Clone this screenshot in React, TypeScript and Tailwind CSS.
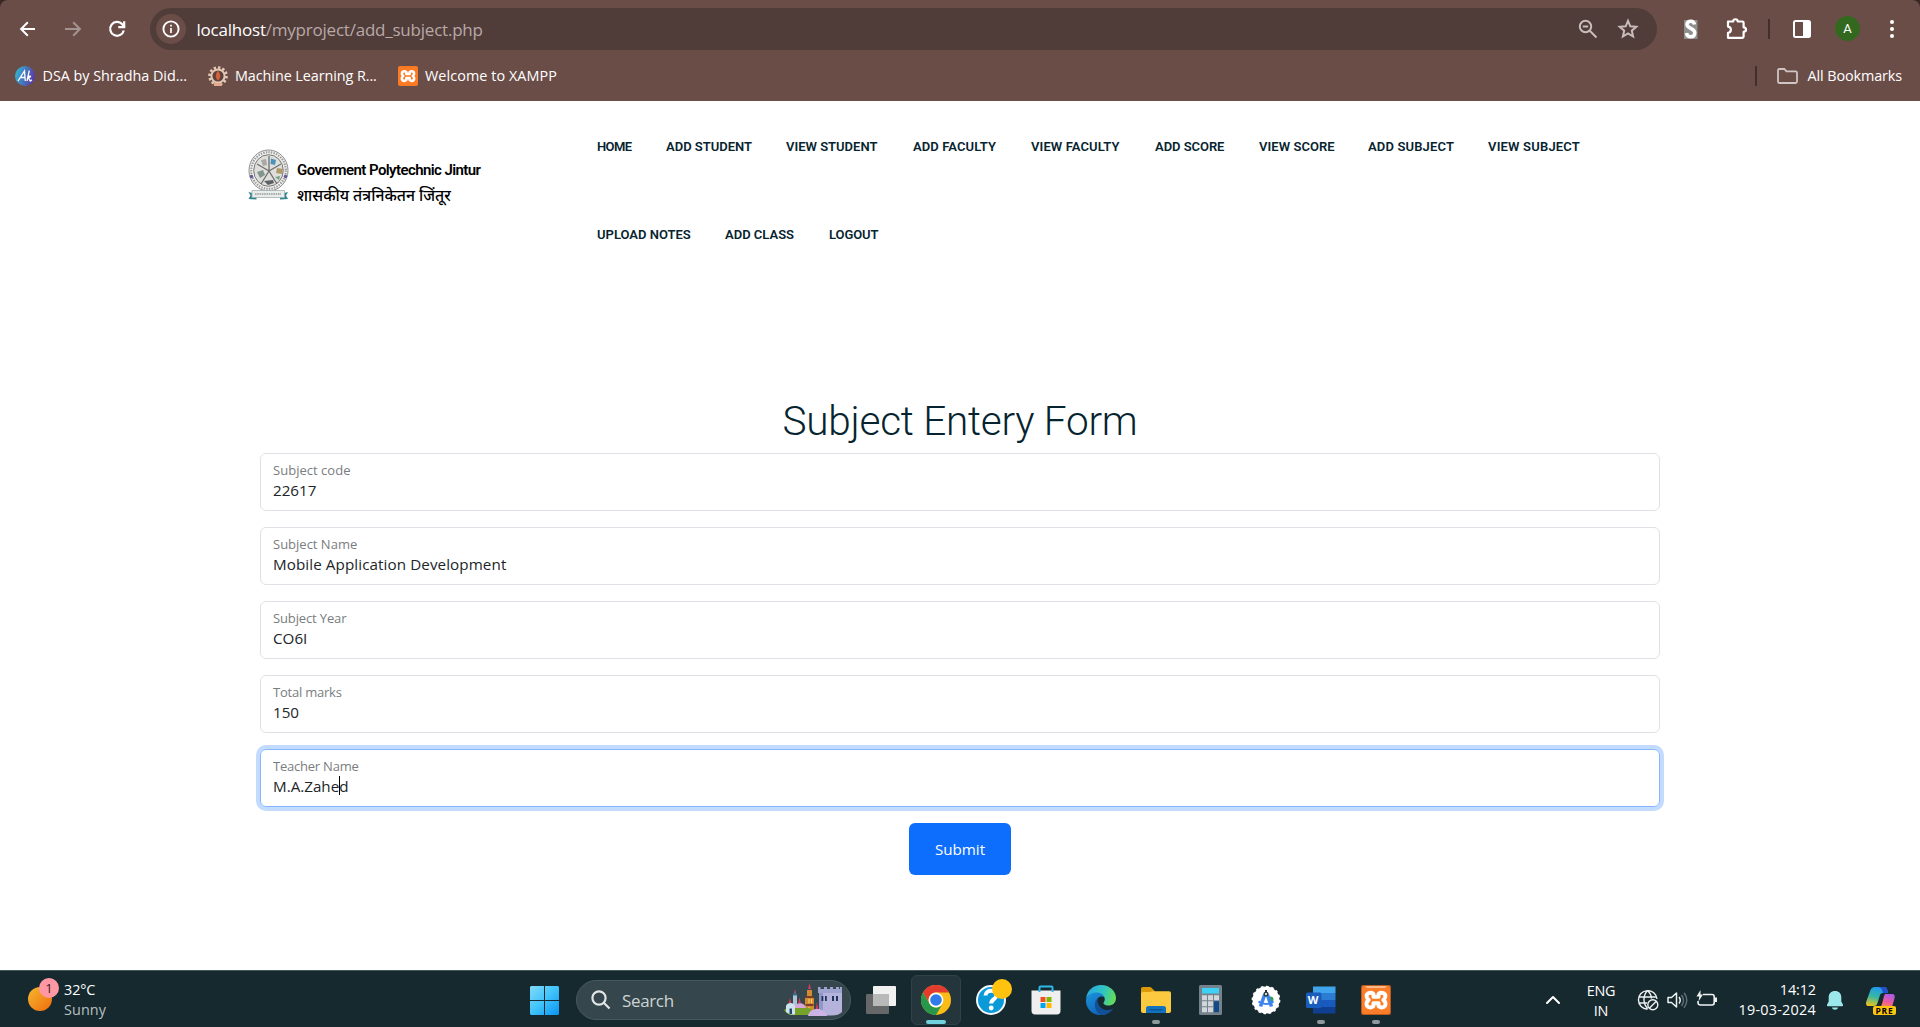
import type { ReactNode } from 'react';

const navRows = [
  [
    { label: 'HOME', cls: 'w-[69px] tracking-[-0.6px]' },
    { label: 'ADD STUDENT', cls: 'w-[120px]' },
    { label: 'VIEW STUDENT', cls: 'w-[127px]' },
    { label: 'ADD FACULTY', cls: 'w-[118px] tracking-[0.1px]' },
    { label: 'VIEW FACULTY', cls: 'w-[124px] tracking-[0.1px]' },
    { label: 'ADD SCORE', cls: 'w-[104px] tracking-[-0.05px]' },
    { label: 'VIEW SCORE', cls: 'w-[109px] tracking-[0.05px]' },
    { label: 'ADD SUBJECT', cls: 'w-[120px] tracking-[0.15px]' },
    { label: 'VIEW SUBJECT', cls: 'w-[110px] tracking-[0.19px]' },
  ],
  [
    { label: 'UPLOAD NOTES', cls: 'w-[128px]' },
    { label: 'ADD CLASS', cls: 'w-[104px]' },
    { label: 'LOGOUT', cls: 'w-[70px] tracking-[-0.1px]' },
  ],
];

const fields = [
  { label: 'Subject code', value: '22617', lt: 'tracking-[0.03px]', vt: 'tracking-normal' },
  { label: 'Subject Name', value: 'Mobile Application Development', lt: 'tracking-normal', vt: 'tracking-[0.09px]' },
  { label: 'Subject Year', value: 'CO6I', lt: 'tracking-[-0.14px]', vt: 'tracking-normal' },
  { label: 'Total marks', value: '150', lt: 'tracking-[-0.22px]', vt: 'tracking-normal' },
  { label: 'Teacher Name', value: 'M.A.Zahed', lt: 'tracking-[-0.22px]', vt: 'tracking-normal', focused: true },
];

function GearRing({ cx, cy, r, teeth, fill }: { cx: number; cy: number; r: number; teeth: number; fill: string }) {
  return (
    <circle cx={cx} cy={cy} r={r} fill="none" stroke={fill} strokeWidth="2.6" pathLength={teeth * 2} strokeDasharray="1.1 0.9" />
  );
}

function XamppMark() {
  return (
    <path
      d="M13 10.2c-2.4-1.8-5.4-.2-5.2 2 .1 1.4.7 2 1.6 2.8-1.300.8-1.800 1.600-1.700 3.100.1 2.500 3 3.500 5.300 1.700l0-2.300h4v2.300c2.300 1.800 5.200.8 5.300-1.700.1-1.500-.400-2.300-1.700-3.100.9-.8 1.500-1.400 1.600-2.800.2-2.200-2.800-3.800-5.200-2v2.300h-4z"
      fill="none"
      stroke="#fff"
      strokeWidth="3"
      strokeLinejoin="round"
    />
  );
}

function Toolbar() {
  return (
    <div className="flex h-[58px] items-start pl-[18px] pt-2">
      <svg className="mt-[11px]" width="20" height="20" viewBox="0 0 20 20" fill="none" stroke="#fff" strokeWidth="2">
        <path d="M17 10H3.500M9.800 3.300 3.100 10l6.700 6.700" />
      </svg>
      <svg className="ml-[25px] mt-[11px]" width="20" height="20" viewBox="0 0 20 20" fill="none" stroke="#a39391" strokeWidth="2">
        <path d="M2 10h14.500M10.200 3.300l6.700 6.700-6.700 6.700" />
      </svg>
      <svg className="ml-[24px] mt-[11px]" width="20" height="20" viewBox="0 0 20 20" fill="none" stroke="#fff" strokeWidth="2.200">
        <path d="M16.800 11.500A6.900 6.900 0 1 1 15.300 5.300l1.500 2" />
        <path d="M17.200 2.200v5.900h-5.900" />
      </svg>
      <div className="ml-[23px] flex h-[42px] w-[1507px] items-center rounded-full bg-[#503c39] pl-[6px]">
        <div className="flex size-[30px] items-center justify-center rounded-full bg-[#6b4d48]">
          <svg width="18" height="18" viewBox="0 0 18 18">
            <circle cx="9" cy="9" r="7.600" fill="none" stroke="#fff" strokeWidth="1.900" />
            <path d="M9 8v5M9 4.800v1.700" stroke="#fff" strokeWidth="1.700" />
          </svg>
        </div>
        <div className="ml-[10.500px] w-[1370px] pt-[1px] text-[17px] leading-6 tracking-[-0.22px] text-[#b8a9a7]">
          <span className="text-white">localhost</span>/myproject/add_subject.php
        </div>
        <svg className="ml-[10px]" width="22" height="22" viewBox="0 0 22 22" fill="none" stroke="#c8bdbb" strokeWidth="2">
          <circle cx="8.500" cy="8.500" r="5.700" />
          <path d="M12.800 12.800l6.700 6.700M5.800 8.500h5.400" />
        </svg>
        <svg className="ml-[17px]" width="24" height="24" viewBox="0 0 24 24" fill="none" stroke="#c8bdbb" strokeWidth="2">
          <path d="M12 3.800l2.300 5.500 6 .5-4.500 3.900 1.300 5.800L12 16.400l-5.100 3.100 1.300-5.800-4.500-3.900 6-.5z" />
        </svg>
      </div>
      <svg className="ml-[26px] mt-[11px]" width="16" height="20" viewBox="0 0 16 20">
        <path d="M1 1h13.500v19H1z" fill="#8e8e8e" />
        <path d="M11.500 5.500C11 2.800 9.900 2.200 7.900 2.200 5.300 2.200 3.900 3.600 4 5.600c.2 4.200 7.800 3.300 7.800 8.200 0 2.600-1.700 4-4 4-2.500 0-3.900-1.100-4.300-3.800" fill="none" stroke="#fff" strokeWidth="3.500" />
      </svg>
      <svg className="ml-[25px] mt-[8px]" width="26" height="26" viewBox="0 0 26 26">
        <path
          d="M4 5.500h5.200c.1-3 4.400-3 4.500 0h4.700c.8 0 1.200.5 1.200 1.200v4.600c3.200.2 3.200 4.400 0 4.600v4.700c0 .8-.5 1.200-1.200 1.200H4v-5c3.800-.4 3.800-5.800 0-6.200z"
          fill="none"
          stroke="#fff"
          strokeWidth="2.200"
          strokeLinejoin="round"
        />
      </svg>
      <div className="ml-[18px] mt-[11px] h-5 w-[2px] bg-[#422e2b]" />
      <svg className="ml-[22px] mt-[11px]" width="20" height="20" viewBox="0 0 20 20">
        <rect x="2" y="2" width="16" height="16" rx="1.500" fill="none" stroke="#fff" strokeWidth="2" />
        <path d="M11 2h7v16h-7z" fill="#fff" />
      </svg>
      <div className="ml-[23px] mt-[8px] flex size-[25px] items-center justify-center rounded-full bg-[#33691e] font-[Roboto] text-[13px] text-white">A</div>
      <div className="ml-[30px] mt-[12px] flex flex-col gap-[3px]">
        <i className="size-1 rounded-full bg-white" />
        <i className="size-1 rounded-full bg-white" />
        <i className="size-1 rounded-full bg-white" />
      </div>
    </div>
  );
}

function Bookmarks() {
  return (
    <div className="flex h-[43px] items-start pl-[15px] pt-2 text-[14.400px] leading-5 text-white">
      <svg width="20" height="20" viewBox="0 0 20 20">
        <defs>
          <linearGradient id="ak" x1="0" x2="1" y1="0.300" y2="0.600">
            <stop offset="0" stopColor="#33b5d0" />
            <stop offset="1" stopColor="#5a35a8" />
          </linearGradient>
        </defs>
        <circle cx="10" cy="10" r="10" fill="url(#ak)" />
        <path d="M3 15 9.500 5l.8 10M5 11.500h5M14.300 4.500 12 15m.800-3.500c3-3 4.200-.5.500 0l2 3.500 1.700-1.200" fill="none" stroke="#fff" strokeWidth="1.300" />
      </svg>
      <span className="ml-[7.500px] w-[165.500px] tracking-[-0.03px]">DSA by Shradha Did...</span>
      <svg width="20" height="20" viewBox="0 0 20 20">
        <GearRing cx={10} cy={10} r={8.500} teeth={12} fill="#e3c9b5" />
        <circle cx="10" cy="10" r="6.600" fill="#5d423c" stroke="#e3c9b5" strokeWidth="2" />
        <path d="M10 4.500c3 4.500 3 7 0 10-3-3-3-5.500 0-10z" fill="#d2603a" />
        <path d="M6 17h8v3H6z" fill="#e3a98d" />
      </svg>
      <span className="ml-[7px] w-[163px] tracking-[-0.08px]">Machine Learning R...</span>
      <svg width="20" height="20" viewBox="0 0 20 20">
        <rect width="20" height="20" rx="2" fill="#fb7a24" />
        <g transform="translate(-2.750 -2.750) scale(.85)">
          <XamppMark />
        </g>
      </svg>
      <span className="ml-[7px] w-[1330px] tracking-[0.070px]">Welcome to XAMPP</span>
      <div className="h-5 w-[2px] bg-[#422e2b]" />
      <svg className="ml-[20px]" width="21" height="20" viewBox="0 0 21 20" fill="none" stroke="#cfc5c3" strokeWidth="1.800">
        <path d="M1 4.500C1 3.500 1.500 3 2.300 3h5l2.200 2.300h9c.9 0 1.500.6 1.500 1.500v8.700c0 .9-.6 1.500-1.500 1.500H2.300C1.500 17 1 16.400 1 15.500z" />
      </svg>
      <span className="ml-[9.500px] tracking-[-0.1px]">All Bookmarks</span>
    </div>
  );
}

function Emblem() {
  return (
    <svg width="42" height="52" viewBox="0 0 42 52">
      <ellipse cx="20.500" cy="21.500" rx="19.500" ry="20.500" fill="#f1f1f0" stroke="#8d8d8d" strokeWidth="1" />
      <ellipse cx="20.500" cy="21.500" rx="17.300" ry="18.300" fill="none" stroke="#9a9a9a" strokeWidth="2.200" strokeDasharray="1.400 1.200" />
      <ellipse cx="20.500" cy="21.500" rx="14.800" ry="15.800" fill="#dededb" stroke="#777" strokeWidth="1" />
      <path d="M21 22 9 15M21 22l12-7M21 22 13 35M21 22l8 13M21 22V7" stroke="#6f6f6f" strokeWidth="1.300" />
      <path d="M23 9.500l5 1.500-1 5-4.500-1z" fill="#4b93b8" />
      <path d="M13 11l5-1 1 6-4 1z" fill="#aaa8a4" />
      <path d="M29 19l6 1-1 5-6-1z" fill="#b09a6a" />
      <path d="M9 23l6-2 2 5-5 3z" fill="#81978d" />
      <path d="M16 32l9-1 1 3-6 2z" fill="#5d5f62" />
      <path d="M27 28l5-1-1 4z" fill="#76a085" />
      <circle cx="3.500" cy="27.500" r="1.700" fill="#64569b" />
      <circle cx="37.500" cy="27.500" r="1.700" fill="#64569b" />
      <path d="M0.500 43l8 2v5.500l-8-.5 2-3.500zM40 43l-8 2v5.500l8-.5-2-3.500z" fill="#2f8590" />
      <path d="M4 41.500h32.500v7H4z" fill="#e9ecea" stroke="#9fb1ae" strokeWidth=".8" />
      <path d="M7 45h26" stroke="#8f9a98" strokeWidth="1.500" strokeDasharray="1.500 .8" />
    </svg>
  );
}

function SiteHeader() {
  return (
    <header className="flex h-[276px] pl-[248px]">
      <div className="flex w-[349px] items-start pt-[48px]">
        <Emblem />
        <div className="ml-[7px] mt-[7px] font-[Roboto] text-[15px] leading-6 font-semibold tracking-[-0.58px] whitespace-nowrap text-black">
          <div className="mt-[2px]">Goverment Polytechnic Jintur</div>
          <div className="mt-px font-['Noto_Sans'] text-[15.700px] font-medium tracking-normal">शासकीय तंत्रनिकेतन जिंतूर</div>
        </div>
      </div>
      <nav className="pt-[34px] font-[Roboto] text-[13px] leading-6 font-semibold whitespace-nowrap text-[#06242f]">
        {navRows.map((row, i) => (
          <div key={i} className="flex h-[88px]">
            {row.map((item) => (
              <a key={item.label} className={item.cls}>
                {item.label}
              </a>
            ))}
          </div>
        ))}
      </nav>
    </header>
  );
}

function SubjectForm() {
  return (
    <main className="flex flex-col items-center">
      <h1 className="mt-[19px] h-[57px] font-[Roboto] text-[40.500px] leading-[50px] font-light tracking-[-0.25px] text-[#06242f]">Subject Entery Form</h1>
      <form className="flex w-[1400px] flex-col items-center gap-4">
        {fields.map((f) => (
          <div
            key={f.label}
            className={
              f.focused
                ? 'h-[58px] w-full rounded-md border border-[#86b7fe] pl-3 pt-[7px] shadow-[0_0_0_4px_#c2dbfe]'
                : 'h-[58px] w-full rounded-md border border-[#dee2e6] pl-3 pt-[7px]'
            }
          >
            <div className={'text-[13px] leading-[18px] text-[#7a7d80] ' + f.lt}>{f.label}</div>
            <div className={'flex text-[15.200px] leading-[22px] text-[#212529] ' + f.vt}>
              {f.focused ? (
                <>
                  M.A.Zahe
                  <span className="relative">
                    <span className="absolute top-px left-0 h-[19px] w-px bg-black" />d
                  </span>
                </>
              ) : (
                f.value
              )}
            </div>
          </div>
        ))}
        <button type="button" className="h-[52px] w-[102px] rounded-md bg-[#0d6efd] text-[15.200px] text-white">
          Submit
        </button>
      </form>
    </main>
  );
}

function ChromeIcon() {
  return (
    <svg width="30" height="30" viewBox="0 0 30 30">
      <circle cx="15" cy="15" r="15" fill="#fbbc15" />
      <path d="M2 7.500A15 15 0 0 1 28 7.500H15a7.500 7.500 0 0 0-6.500 11.300z" fill="#e33b2e" />
      <path d="M2 7.500A15 15 0 0 0 15 30l6.500-11.200a7.500 7.500 0 0 1-13 0z" fill="#27984b" />
      <circle cx="15" cy="15" r="7.400" fill="#fff" />
      <circle cx="15" cy="15" r="5.800" fill="#2f7bea" />
    </svg>
  );
}

function HelpIcon() {
  return (
    <svg width="36" height="36" viewBox="0 0 36 36">
      <circle cx="15" cy="21" r="14" fill="#0a99d9" stroke="#f2f8fb" strokeWidth="2" />
      <path d="M9.500 16.500c.3-6.500 11.500-6 11 .2-.3 3.600-5.300 3.600-5.300 7.800" fill="none" stroke="#fff" strokeWidth="4" />
      <circle cx="15.200" cy="29" r="2.400" fill="#fff" />
      <circle cx="26" cy="10" r="10" fill="#ffc20e" />
    </svg>
  );
}

function StoreIcon() {
  return (
    <svg width="30" height="30" viewBox="0 0 30 30">
      <path d="M.5 5.500h29V26c0 2.200-1.300 3.500-3.500 3.500H4C1.800 29.500.5 28.200.5 26z" fill="#efefef" />
      <path d="M9.500 12h5v5h-5z" fill="#f25022" />
      <path d="M15.500 12h5v5h-5z" fill="#7fba00" />
      <path d="M9.500 18h5v5h-5z" fill="#00a4ef" />
      <path d="M15.500 18h5v5h-5z" fill="#ffb900" />
      <path d="M8.500 7V2.500c0-.6.300-1 1-1h11c.7 0 1 .4 1 1V7" fill="none" stroke="#2db9ea" strokeWidth="2" />
    </svg>
  );
}

function EdgeIcon() {
  return (
    <svg width="30" height="30" viewBox="0 0 30 30">
      <defs>
        <linearGradient id="eg1" x1="0" x2="1" y1="0.300" y2="0.500">
          <stop offset="0" stopColor="#2aa7e0" />
          <stop offset=".55" stopColor="#2fc4c4" />
          <stop offset="1" stopColor="#65dc55" />
        </linearGradient>
        <linearGradient id="eg2" x1="0" x2="0.600" y1="0" y2="1">
          <stop offset="0" stopColor="#1b95dc" />
          <stop offset="1" stopColor="#0f62b8" />
        </linearGradient>
      </defs>
      <path d="M0 14C1 5 7.500 0 15 0c9 0 15 6.500 15 13 0 5-3.500 7.500-7.500 7.500-4 0-5.500-1.700-5-2.700 2-2.500 1.500-5.300-.3-7C12.500 6.500 3 8 0 14z" fill="url(#eg1)" />
      <path d="M0 14.500C1.500 9.500 6 7.500 10.500 7.500c3.500 0 6.500 1.700 7.500 4.500-5-2-8 2-7 7 1 5.500 6 9.500 10.500 9.500C19.500 29.500 17.500 30 15 30 7 30-.8 24 0 14.500z" fill="url(#eg2)" />
      <path d="M12 12.800c-2 6.200 3 12.200 9.500 12.200 2.500 0 4.500-.8 6-1.700C25.500 27 21 30 16 30 9 29 6.500 17 12 12.800z" fill="#124f96" />
    </svg>
  );
}

function FolderIcon() {
  return (
    <svg width="30" height="26" viewBox="0 0 30 26">
      <path d="M0 2C0 .7.700 0 2 0h6.500c1 0 1.500.3 2.200 1l3 3v5H0z" fill="#dc9a08" />
      <path d="M0 7c0-1.300.7-2 2-2h7c1 0 1.600-.3 2.300-.8h16.700c1.300 0 2 .7 2 2V24c0 1.300-.7 2-2 2H2c-1.300 0-2-.7-2-2z" fill="#fdca3f" />
      <path d="M5 26v-4.500c0-1.700 1-2.500 2.500-2.500h15c1.500 0 2.500.8 2.500 2.500V26z" fill="#1272bd" />
      <path d="M8.500 22.800h13" stroke="#0b4f8d" strokeWidth="1.200" />
    </svg>
  );
}

function CalculatorIcon() {
  return (
    <svg width="23" height="30" viewBox="0 0 23 30">
      <rect width="23" height="30" rx="1.500" fill="#75818b" />
      <path d="M3 3h17v5.500H3z" fill="#3fd0f5" />
      <path d="M3 10.200h5v5H3zM9 10.200h5v5H9zM15 10.200h5v5h-5zM3 16.200h5v5H3zM9 16.200h5v5H9zM3 22.200h5v5H3zM9 22.200h5v5H9z" fill="#d0d6db" />
      <path d="M15 16.200h5v11h-5z" fill="#124a89" />
    </svg>
  );
}

function AndroidStudioIcon() {
  return (
    <svg width="30" height="30" viewBox="0 0 30 30">
      <circle cx="15" cy="15" r="13.500" fill="#fff" />
      <circle cx="15" cy="15" r="13.600" fill="none" stroke="#fff" strokeWidth="1.500" pathLength="32" strokeDasharray="1 1" />
      <circle cx="19.500" cy="14.500" r="3" fill="#34a34f" />
      <path d="M13.700 9.500 9.500 21.500M16.300 9.500l4.200 12" stroke="#3f83ee" strokeWidth="3.600" />
      <path d="M7.500 16.500c4 3.300 11 3.300 15 0" fill="none" stroke="#3f83ee" strokeWidth="2.200" />
      <path d="M15 5v2" stroke="#333" strokeWidth="2" />
      <circle cx="15" cy="9" r="1.800" fill="#fff" stroke="#333f48" strokeWidth="1.500" />
    </svg>
  );
}

function WordIcon() {
  return (
    <div className="relative">
      <svg width="30" height="30" viewBox="0 0 30 30">
        <path d="M7 1.500h22.500V8H7z" fill="#41a5ee" />
        <path d="M7 8h22.500v7H7z" fill="#2b7cd3" />
        <path d="M7 15h22.500v7H7z" fill="#185abd" />
        <path d="M7 22h22.500v6.500H7z" fill="#103f91" />
        <rect x="0" y="7.500" width="15.500" height="15.500" rx="1.500" fill="#1a5cbe" />
      </svg>
      <span className="absolute top-[7px] left-0 w-[15px] text-center text-[11px] leading-4 font-bold text-white">W</span>
    </div>
  );
}

function XamppIcon() {
  return (
    <svg width="30" height="30" viewBox="0 0 30 30">
      <rect width="30" height="30" rx="2" fill="#b85a20" />
      <rect x="1" y="1" width="28" height="28" rx="2" fill="#fa7e2a" />
      <path d="M4 1h22l-2 2H6z" fill="#fdb98b" />
      <g transform="translate(-4.500 -4.500) scale(1.300)">
        <XamppMark />
      </g>
    </svg>
  );
}

function Castle() {
  return (
    <svg width="58" height="34" viewBox="0 0 58 34">
      <path d="M35 8h23v21c-2 2.500-6 3.500-10 3.500H35z" fill="#b5b2dc" />
      <path d="M35 8h4v24h-4z" fill="#9396c9" />
      <path d="M34 10V4h2.500v2H40V4h3v2h3V4h3v2h3V4h3v2h1V4h2v6z" fill="#9ea3cf" />
      <path d="M37.500 13h1.800v5h-1.800zM41 13h1.800v5H41zM48 13h2v5h-2zM52 13h2v5h-2z" fill="#1f355b" />
      <path d="M23 7h5v8h2v17h-9V15h2z" fill="#d38a32" />
      <path d="M21.500 13h8v2h-8zM21.500 21h8v2h-8z" fill="#793e2a" />
      <path d="M24.500 16h1v4h-1zM27 16h1v4h-1zM24.500 24h1v4h-1z" fill="#ffd566" />
      <path d="M25.500 0l1.500 6h-3z" fill="#d63963" />
      <path d="M9 12h4v12H9z" fill="#aac3d8" />
      <path d="M11 8l2.500 4.500h-5z" fill="#3f6d91" />
      <path d="M10.500 7h1v3h-1z" fill="#e23a58" />
      <path d="M0 27c5-4 22-5 28 0v5H10c-5 0-8-2-10-5z" fill="#77a229" />
      <path d="M10 25c1-6.500 11-6.500 12 0z" fill="#d8a7d9" />
      <path d="M2 23c1-4 8-4 9 0v8.500H6L2 29z" fill="#cfe3ef" />
      <path d="M5.500 25.500h2.500V31H5.500z" fill="#23486b" />
      <path d="M6 15l1.200 5H4.800zM15.500 14l1.200 6h-2.400zM33 19l1.200 7h-2.400z" fill="#e23a58" />
      <path d="M24 33c1-9.500 17-9.500 19 0z" fill="#cbb3e6" />
    </svg>
  );
}

function TaskItem({ children, dot }: { children: ReactNode; dot?: boolean }) {
  return (
    <div className="flex h-[50px] w-[55px] flex-col items-center">
      <div className="flex h-[45px] items-center pt-[5px]">
        <div className="flex h-[30px] items-center">{children}</div>
      </div>
      {dot && <div className="h-1 w-2 rounded-full bg-[#8f999c]" />}
    </div>
  );
}

function Taskbar() {
  return (
    <footer className="flex h-[57px] items-start border-t border-[#42565b] bg-[#16292e] text-[14.400px] leading-5 text-white">
      <div className="flex w-[530px] items-start pt-[6px] pl-[28px]">
        <div className="relative mt-[10px] size-6 rounded-full bg-linear-to-br from-[#f3b72f] to-[#ee6a0c]">
          <span className="absolute -top-[9px] left-[11px] flex size-5 items-center justify-center rounded-full bg-[#ff98a2] text-[13px] text-[#331a1e]">1</span>
        </div>
        <div className="ml-[12px] mt-[3px]">
          <div className="tracking-[-0.1px]">32°C</div>
          <div className="tracking-[0.080px] text-[#b9c0c2]">Sunny</div>
        </div>
      </div>
      <svg className="mt-[15px]" width="29" height="29" viewBox="0 0 29 29">
        <defs>
          <linearGradient id="win" x1="0" x2="1" y1="0" y2="1">
            <stop offset="0" stopColor="#82dbfb" />
            <stop offset=".5" stopColor="#3fc3fb" />
            <stop offset="1" stopColor="#0a93f2" />
          </linearGradient>
        </defs>
        <path d="M1 0h13v14H0V1zM15 0h13l1 1v13H15zM0 15h14v14H1l-1-1zM15 15h14v13l-1 1H15z" fill="url(#win)" />
      </svg>
      <div className="mt-[9px] ml-[17px] flex h-10 w-[275px] items-center rounded-full border border-[#47595e] bg-[#35474c] pl-[14px]">
        <svg width="20" height="20" viewBox="0 0 20 20" fill="none" stroke="#e2e5e6" strokeWidth="2.200">
          <circle cx="8" cy="8" r="6.600" />
          <path d="M12.800 12.800l5.700 5.700" />
        </svg>
        <span className="mt-px ml-[11px] w-[162px] text-[17px] tracking-[-0.350px] text-[#cdd3d4]">Search</span>
        <Castle />
      </div>
      <svg className="mt-[15px] ml-[15px]" width="30" height="28" viewBox="0 0 30 28">
        <rect x="0" y="8" width="23" height="20" rx="1" fill="#666769" />
        <rect x="7" y="0" width="23" height="20" rx="1" fill="#f1f1f1" />
        <path d="M7 8h16v12H7z" fill="#b9b9b9" />
      </svg>
      <div className="mt-[4px] ml-[15px] flex size-[50px] flex-col items-center rounded-md border border-[#314247] bg-[#24363b] pt-[9px]">
        <ChromeIcon />
        <div className="mt-[5px] h-1 w-5 rounded-full bg-[#70d2dc]" />
      </div>
      <div className="mt-[4px] flex">
        <div className="w-[52px] pt-[4px] pl-[15px]">
          <HelpIcon />
        </div>
        <TaskItem>
          <div className="pl-[10px]">
            <StoreIcon />
          </div>
        </TaskItem>
        <div className="ml-[5px] flex">
          <TaskItem>
            <EdgeIcon />
          </TaskItem>
          <TaskItem dot>
            <FolderIcon />
          </TaskItem>
          <TaskItem>
            <CalculatorIcon />
          </TaskItem>
          <TaskItem>
            <AndroidStudioIcon />
          </TaskItem>
          <TaskItem dot>
            <WordIcon />
          </TaskItem>
          <TaskItem dot>
            <XamppIcon />
          </TaskItem>
        </div>
      </div>
      <div className="ml-auto flex items-start">
        <svg className="mt-[24px]" width="14" height="10" viewBox="0 0 14 10" fill="none" stroke="#fff" strokeWidth="2">
          <path d="M1 8l6-6 6 6" strokeLinecap="round" strokeLinejoin="round" />
        </svg>
        <div className="mt-[10px] ml-[24px] w-[34px] text-center tracking-[-0.250px]">
          <div>ENG</div>
          <div>IN</div>
        </div>
        <svg className="mt-[18px] ml-[19px]" width="22" height="22" viewBox="0 0 22 22" fill="none" stroke="#eef1f1" strokeWidth="1.400">
          <path d="M20 10A9.300 9.300 0 1 0 10.500 20.200M1.700 8h17.600M1.700 14H10M10.700 1.500c-5 5-5 13 0 18M10.700 1.500c2.500 2.500 3.600 5.200 3.800 8" />
          <circle cx="15.800" cy="15.800" r="5" />
          <path d="M12.300 19.300l7-7" />
        </svg>
        <svg className="mt-[20px] ml-[8px]" width="21" height="20" viewBox="0 0 21 20" fill="none" stroke="#eef1f1" strokeWidth="1.500">
          <path d="M1 6.500h3.500l5-4.500v14l-5-4.500H1z" strokeLinejoin="round" />
          <path d="M12 6c1.500 2 1.500 4.500 0 6.500" />
          <path d="M14.500 4c2.600 3.500 2.600 7.500 0 11M17 1.800c3.700 4.500 3.700 10.500 0 15" stroke="#617075" />
        </svg>
        <svg className="mt-[19px] ml-[8px]" width="22" height="20" viewBox="0 0 22 20" fill="none" stroke="#eef1f1" strokeWidth="1.600">
          <path d="M7 4.500h9c1.500 0 2.200.8 2.200 2.200v6.100c0 1.400-.7 2.200-2.200 2.200H4.500C3 15 2 14.200 2 12.800V11" />
          <path d="M19.800 7.500v4.500" strokeWidth="2.400" />
          <path d="M4.500 0 .5 6.500h2.800L2.500 11.500l4.500-7H4.500z" fill="#eef1f1" stroke="none" />
        </svg>
        <div className="mt-[9px] ml-[9px] w-[89px] text-right">
          <div className="tracking-[-0.100px]">14:12</div>
          <div className="tracking-[0.240px]">19-03-2024</div>
        </div>
        <svg className="mt-[20px] ml-[11px]" width="16" height="20" viewBox="0 0 16 20">
          <path d="M8 0c4 0 6.300 2.700 6.300 6.300v4.200l1.700 3.300c.4.800 0 1.400-.8 1.400H.8c-.8 0-1.200-.6-.8-1.400l1.700-3.300V6.300C1.700 2.700 4 0 8 0zM5 16.500h6c-.5 3-5.500 3-6 0z" fill="#9be8ea" />
        </svg>
        <svg className="mt-[16px] ml-[23px]" width="30" height="28" viewBox="0 0 30 28">
          <defs>
            <linearGradient id="cp1" x1="0.500" x2="0.200" y1="0" y2="1">
              <stop offset="0" stopColor="#2199ee" />
              <stop offset=".5" stopColor="#35b7a4" />
              <stop offset="1" stopColor="#f0c419" />
            </linearGradient>
            <linearGradient id="cp2" x1="0.700" x2="0.300" y1="0" y2="1">
              <stop offset="0" stopColor="#a95bea" />
              <stop offset=".6" stopColor="#ee5c9a" />
              <stop offset="1" stopColor="#fb8a4d" />
            </linearGradient>
          </defs>
          <path d="M9 0h9c3 0 3.500 3 4 6h-5c-2 0-3 1.500-3.500 3.500L11.500 16c-.5 2-1.500 3-3.500 3H3c-3 0-3.500-2-2.500-5L4.500 3C5.300 1 6.800 0 9 0z" fill="url(#cp1)" />
          <path d="M12 0h6c3 0 3.500 3 4 6l-5 .3C16.500 3 15.500.5 12 0z" fill="#2450cf" />
          <path d="M19 7h7c2.500 0 3.200 1.500 2.600 4L26 20H13c2 0 2.500-1.500 3-3l2-8z" fill="url(#cp2)" />
        </svg>
        <span className="relative mr-[24px] w-0">
          <span className="absolute top-[35px] right-0 h-[9px] w-[23px] rounded-[2px] bg-[#fbc60d] text-center text-[8.500px] leading-[9px] font-bold tracking-[0.800px] text-black">PRE</span>
        </span>
      </div>
    </footer>
  );
}

export default function App() {
  return (
    <div className="flex h-[1027px] w-[1920px] flex-col overflow-hidden bg-white font-['Open_Sans',sans-serif]">
      <div className="h-[101px] bg-[#3a2724]">
        <div className="h-full rounded-t-lg bg-[#6b4d48]">
          <Toolbar />
          <Bookmarks />
        </div>
      </div>
      <div className="h-[869px]">
        <SiteHeader />
        <SubjectForm />
      </div>
      <Taskbar />
    </div>
  );
}
